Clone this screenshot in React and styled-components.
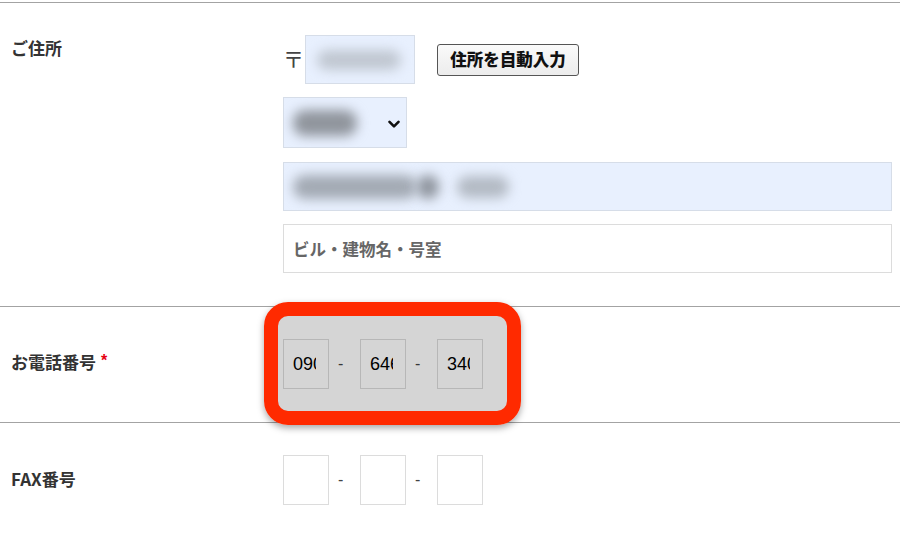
import React from "react";
import styled, { createGlobalStyle, css } from "styled-components";

const GlobalStyle = createGlobalStyle`
  html, body {
    margin: 0;
    background: #fff;
  }
  body {
    font-family: "Noto Sans CJK JP", "Liberation Sans", sans-serif;
    color: #333;
  }
`;

const Form = styled.div`
  padding-top: 2px;
  width: 900px;
`;

const Row = styled.div`
  display: flex;
  align-items: ${(p) => (p.$top ? "flex-start" : "center")};
  border-top: 1px solid #a3a3a3;
  padding: 32px 0 33px;
`;

const Label = styled.div`
  width: 283px;
  flex-shrink: 0;
  box-sizing: border-box;
  padding-left: 11px;
  font-size: 17px;
  font-weight: 700;
  line-height: 26px;
  color: #333;
  margin-top: ${(p) => (p.$top ? "0" : "-2px")};
`;

const Required = styled.span`
  color: #e60012;
  font-family: "Liberation Sans", sans-serif;
  font-size: 16px;
  font-weight: 700;
  margin-left: 5px;
  position: relative;
  top: -3px;
`;

const Stack = styled.div`
  display: flex;
  flex-direction: column;
  gap: 13px;
  flex: 1;
  padding-right: 8px;
`;

const Line = styled.div`
  display: flex;
  align-items: center;
`;

const Postmark = styled.span`
  font-size: 21px;
  line-height: 1;
  color: #444;
  width: 22px;
  margin-top: -3px;
`;

const Box = styled.div`
  box-sizing: border-box;
  height: ${(p) => p.$h || 49}px;
  width: ${(p) => (p.$w ? `${p.$w}px` : "100%")};
  margin-top: ${(p) => p.$mt || 0}px;
  border: 1px solid ${(p) => (p.$filled ? "#d6dde8" : "#dcdcdc")};
  background: ${(p) => (p.$filled ? "#e8f0fe" : "#fff")};
  display: flex;
  align-items: center;
  padding: 0 9px;
  position: relative;
  overflow: hidden;
`;

const Blur = styled.span`
  display: inline-block;
  height: ${(p) => p.$h}px;
  width: ${(p) => p.$w}px;
  margin-left: ${(p) => p.$ml || 0}px;
  background: ${(p) => p.$c};
  border-radius: 12px;
  filter: blur(6px);
  flex-shrink: 0;
`;

const Chevron = styled.svg`
  position: absolute;
  right: 6px;
  top: 22px;
`;

const Placeholder = styled.span`
  font-size: 16.5px;
  font-weight: 700;
  color: #666;
`;

const AutoButton = styled.button`
  margin-left: 22px;
  height: 32px;
  width: 142px;
  box-sizing: border-box;
  border: 1px solid #555;
  border-radius: 3px;
  background: linear-gradient(#fafafa, #ececec);
  font-family: "Noto Sans CJK JP", sans-serif;
  font-size: 16.5px;
  font-weight: 900;
  color: #111;
  padding: 0;
  line-height: 1;
`;

const Fields = styled.div`
  display: flex;
  align-items: center;
  position: relative;
  isolation: isolate;
  ${(p) =>
    p.$highlight &&
    css`
      &::after {
        content: "";
        position: absolute;
        top: -37px;
        bottom: -36px;
        left: -19px;
        right: -38px;
        border: 14px solid #ff2a00;
        border-radius: 24px;
        background: rgba(0, 0, 0, 0.165);
        box-shadow: 0 3px 7px rgba(0, 0, 0, 0.35);
        pointer-events: none;
      }
    `}
`;

const NumInput = styled.input`
  box-sizing: border-box;
  width: 46px;
  height: 50px;
  border: 1px solid #dcdcdc;
  background: #fff;
  padding: 0 12px 0 9px;
  margin: 0;
  font-family: "Liberation Sans", sans-serif;
  font-size: 18px;
  color: #000;
  outline: none;
`;

const Dash = styled.span`
  font-family: "Liberation Sans", sans-serif;
  font-size: 16px;
  color: #444;
  width: 31px;
  padding-left: 9px;
  box-sizing: border-box;
`;

function NumberFields({ values, highlight }) {
  return (
    <Fields $highlight={highlight}>
      <NumInput readOnly value={values[0]} />
      <Dash>-</Dash>
      <NumInput readOnly value={values[1]} />
      <Dash>-</Dash>
      <NumInput readOnly value={values[2]} />
    </Fields>
  );
}

export default function App() {
  return (
    <>
      <GlobalStyle />
      <Form>
        <Row $top>
          <Label $top>ご住所</Label>
          <Stack>
            <Line>
              <Postmark>〒</Postmark>
              <Box $filled $w={110}>
                <Blur $w={84} $h={20} $ml={2} $c="#c0c7d1" />
              </Box>
              <AutoButton>住所を自動入力</AutoButton>
            </Line>
            <Box $filled $w={124} $h={51}>
              <Blur $w={64} $h={26} $c="#90959d" />
              <Chevron width="12" height="9" viewBox="0 0 12 9">
                <path d="M1.5 1.8 L6 6.3 L10.5 1.8" fill="none" stroke="#111" strokeWidth="2.6" strokeLinecap="round" strokeLinejoin="round" />
              </Chevron>
            </Box>
            <Box $filled $mt={1}>
              <Blur $w={124} $h={24} $c="#a3aab4" />
              <Blur $w={22} $h={24} $ml={0} $c="#8f959e" />
              <Blur $w={52} $h={22} $ml={18} $c="#b3bac4" />
            </Box>
            <Box>
              <Placeholder>ビル・建物名・号室</Placeholder>
            </Box>
          </Stack>
        </Row>
        <Row>
          <Label>
            お電話番号<Required>*</Required>
          </Label>
          <NumberFields values={["0900", "6460", "3400"]} highlight />
        </Row>
        <Row>
          <Label>FAX番号</Label>
          <NumberFields values={["", "", ""]} />
        </Row>
      </Form>
    </>
  );
}
